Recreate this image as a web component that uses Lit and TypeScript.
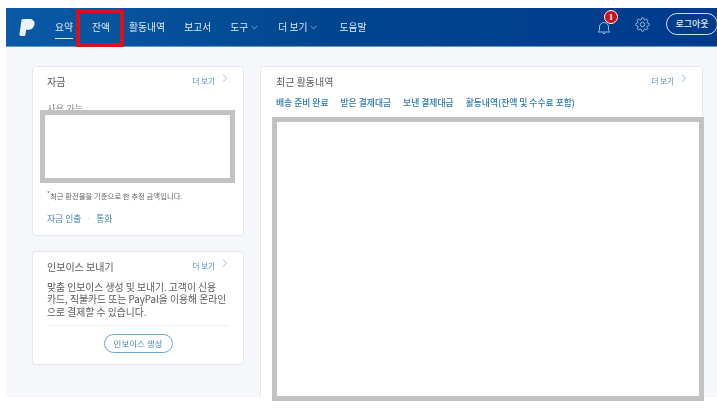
import { LitElement, html, css } from "lit";
import { customElement } from "lit/decorators.js";

const chev = html`<svg class="dn" width="7" height="5" viewBox="0 0 7 5"><path d="M.7 1 3.5 3.8 6.3 1" fill="none" stroke="#9dbfe0" stroke-width=".8"/></svg>`;
const more = html`<a class="more">더 보기<svg width="6" height="9" viewBox="0 0 6 9"><path d="M1 .8 4.600 4.300 1 7.800" fill="none" stroke="#9fb4c6" stroke-width=".9"/></svg></a>`;

@customElement("app-root")
export class AppRoot extends LitElement {
  static styles = css`
    :host { display: block; position: relative; width: 717px; height: 408px; overflow: hidden; background: #fff; box-sizing: border-box; padding: 8px 0 0 6px;
      font-family: "Noto Sans CJK KR", "Noto Sans", sans-serif; color: #555; }
    .nav { height: 39px; display: flex; align-items: center; background: linear-gradient(90deg, #0b5aa6, #00468f 45%, #003a8c); color: #dfeaf5; font-size: 9.800px; position: relative; box-sizing: border-box; border-bottom: 1px solid #5d9bd8; }
    .logo { margin: 0 0 0 13px; width: 16px; height: 17px; flex: none; filter: blur(.4px); }
    .items { display: flex; margin-left: 20px; height: 100%; align-items: center; filter: blur(.3px); }
    .item { display: flex; align-items: center; gap: 3px; height: 100%; white-space: nowrap; position: relative; margin-right: 19px; }
    .item.tool { margin-right: 20px; }
    .item.plus { margin-right: 22px; }
    .item.active::after { content: ""; position: absolute; left: 0; right: 0; bottom: 7px; height: 1px; background: #dfeaf5; }
    .right { margin-left: auto; display: flex; align-items: center; margin-right: -1px; }
    .bell { position: relative; width: 14px; height: 14px; margin-right: 24px; margin-top: 1px; }
    .bell svg { display: block; }
    .badge { position: absolute; left: 7px; top: -11px; width: 14px; height: 14px; border-radius: 50%; background: #d20f1f; border: 1px solid #fff; box-sizing: border-box; color: #fff; font: bold 9px/12px "Liberation Serif", serif; text-align: center; }
    .gear { width: 15px; height: 15px; margin-right: 16px; margin-top: -5px; }
    .logout { width: 52px; height: 22px; box-sizing: border-box; border: 1px solid #cfe0f0; border-radius: 11px; font-size: 9px; font-weight: 500; line-height: 20px; text-align: center; color: #e6eef7; margin-top: -7px; white-space: nowrap; }
    .page { height: 350px; overflow: hidden; background: #f5f7fa; display: grid; grid-template-columns: 212px 443px; gap: 16px; padding: 19px 0 0 26px; box-sizing: border-box; align-items: start; }
    .col { display: flex; flex-direction: column; gap: 15px; }
    .card { background: #fff; border: 1px solid #e3e8ee; border-radius: 4px; box-sizing: border-box; padding: 8px 14px 0; }
    .c1 { height: 170px; display: flex; flex-direction: column; }
    .c2 { height: 114px; }
    .c3 { height: 340px; padding-left: 15px; }
    .head { display: flex; justify-content: space-between; font-size: 10px; line-height: 14px; color: #5a5a5a; filter: blur(.3px); }
    .more { font-size: 7.5px; line-height: 12px; color: #4f8fbf; display: flex; gap: 7px; align-items: flex-start; margin-right: 1px; }
    .more svg { margin-top: -1px; }
    .avail { margin-top: 13px; font-size: 9.300px; line-height: 12px; color: #8a8a8a; filter: blur(.3px); }
    .note { margin-top: auto; font-size: 7.400px; line-height: 10px; color: #666; white-space: nowrap; filter: blur(.3px); }
    .links { display: flex; gap: 5px; margin: 11px 0 10px; font-size: 8.800px; line-height: 13px; color: #3f83b8; filter: blur(.3px); }
    .links i { color: #c5ccd3; font-style: normal; }
    .desc { margin: 7px 0 0; font-size: 9.800px; line-height: 12.400px; color: #5a5a5a; white-space: nowrap; filter: blur(.3px); }
    .desc span { display: block; }
    hr { border: 0; border-top: 1px solid #eef0f2; margin: 7px 0 0; }
    .btnrow { display: flex; justify-content: center; margin-top: 8px; }
    .btn { width: 69px; height: 19px; box-sizing: border-box; border: 1px solid #6ba6d0; border-radius: 10px; color: #3f83b8; font-size: 8.500px; line-height: 17px; text-align: center; white-space: nowrap; filter: blur(.2px); }
    .tabs { display: flex; gap: 12px; margin-top: 8px; font-size: 8.800px; line-height: 12px; color: #2b7ab5; font-weight: 500; white-space: nowrap; filter: blur(.3px); }
    .redact { position: absolute; background: #fff; border: 5px solid #c2c2c2; box-sizing: border-box; }
    .r1 { left: 40px; top: 110px; width: 195px; height: 73px; }
    .r2 { left: 272px; top: 117px; width: 432px; height: 284px; }
    .mark { position: absolute; left: 76px; top: 9px; width: 48px; height: 38px; border: 4px solid #d8121d; box-sizing: border-box; }
  `;

  render() {
    return html`
      <div class="nav">
        <svg class="logo" viewBox="0 0 16 17"><path d="M4 0h6c3.800 0 6 2 5.500 5.200C15 8.600 12.500 10.800 9 10.800H7.200L6.400 15.400C6.200 16.500 5.700 17 4.800 17H2.200C.9 17 .3 16.300.5 15L2.400 1.500C2.500.5 3 0 4 0Z" fill="#eaf3fb"/></svg>
        <div class="items">
          <span class="item active">요약</span>
          <span class="item">잔액</span>
          <span class="item">활동내역</span>
          <span class="item">보고서</span>
          <span class="item tool">도구 ${chev}</span>
          <span class="item plus">더 보기 ${chev}</span>
          <span class="item">도움말</span>
        </div>
        <div class="right">
          <div class="bell">
            <svg width="14" height="14" viewBox="0 0 14 14"><path d="M2.500 9.500V6a4.500 4.500 0 0 1 9 0v3.500l1.500 1.500H1ZM5.500 11.500c.3 1.500 2.700 1.500 3 0" fill="none" stroke="#a9c6e2" stroke-width=".9"/></svg>
            <div class="badge">1</div>
          </div>
          <svg class="gear" viewBox="0 0 24 24" fill="none" stroke="#c3d6ea" stroke-width="1.300"><circle cx="12" cy="12" r="3.500"/><path d="M19.400 15a1.650 1.650 0 0 0 .33 1.820l.06.06a2 2 0 0 1 0 2.830 2 2 0 0 1-2.830 0l-.06-.06a1.650 1.650 0 0 0-1.820-.33 1.650 1.650 0 0 0-1 1.510V21a2 2 0 0 1-2 2 2 2 0 0 1-2-2v-.09A1.650 1.650 0 0 0 9 19.400a1.650 1.650 0 0 0-1.820.33l-.06.06a2 2 0 0 1-2.830 0 2 2 0 0 1 0-2.830l.06-.06a1.650 1.650 0 0 0 .33-1.820 1.650 1.650 0 0 0-1.510-1H3a2 2 0 0 1-2-2 2 2 0 0 1 2-2h.09A1.650 1.650 0 0 0 4.600 9a1.650 1.650 0 0 0-.33-1.820l-.06-.06a2 2 0 0 1 0-2.830 2 2 0 0 1 2.830 0l.06.06a1.650 1.650 0 0 0 1.820.33H9a1.650 1.650 0 0 0 1-1.510V3a2 2 0 0 1 2-2 2 2 0 0 1 2 2v.09a1.650 1.650 0 0 0 1 1.510 1.650 1.650 0 0 0 1.820-.33l.06-.06a2 2 0 0 1 2.830 0 2 2 0 0 1 0 2.830l-.06.06a1.650 1.650 0 0 0-.33 1.820V9a1.650 1.650 0 0 0 1.510 1H21a2 2 0 0 1 2 2 2 2 0 0 1-2 2h-.09a1.650 1.650 0 0 0-1.510 1z"/></svg>
          <div class="logout">로그아웃</div>
        </div>
      </div>
      <div class="page">
        <div class="col">
          <div class="card c1">
            <div class="head"><span>자금</span>${more}</div>
            <div class="avail">사용 가능</div>
            <div class="note"><sup>*</sup>최근 환전율을 기준으로 한 추정 금액입니다.</div>
            <div class="links"><span>자금 인출</span><i>·</i><span>통화</span></div>
          </div>
          <div class="card c2">
            <div class="head"><span>인보이스 보내기</span>${more}</div>
            <p class="desc"><span>맞춤 인보이스 생성 및 보내기. 고객이 신용</span><span>카드, 직불카드 또는 PayPal을 이용해 온라인</span><span>으로 결제할 수 있습니다.</span></p>
            <hr />
            <div class="btnrow"><div class="btn">인보이스 생성</div></div>
          </div>
        </div>
        <div class="card c3">
          <div class="head"><span>최근 활동내역</span>${more}</div>
          <div class="tabs"><span>배송 준비 완료</span><span>받은 결제대금</span><span>보낸 결제대금</span><span>활동내역(잔액 및 수수료 포함)</span></div>
        </div>
      </div>
      <div class="redact r1"></div>
      <div class="redact r2"></div>
      <div class="mark"></div>
    `;
  }
}
